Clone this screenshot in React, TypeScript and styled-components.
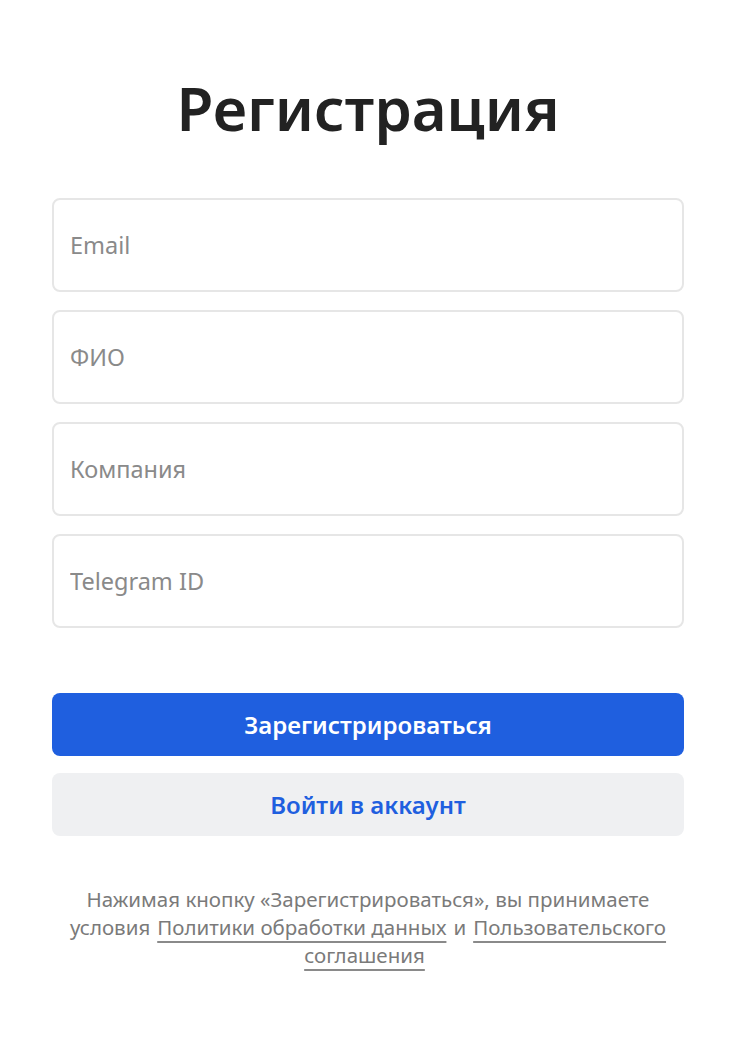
import React from 'react';
import styled, { createGlobalStyle } from 'styled-components';

const GlobalStyle = createGlobalStyle`
  * { box-sizing: border-box; }
  body {
    margin: 0;
    background: #ffffff;
    font-family: "Noto Sans", "Open Sans", sans-serif;
  }
`;

const Page = styled.div`
  width: 632px;
  margin: 0 auto;
  padding: 68px 0 40px;
  display: flex;
  flex-direction: column;
`;

const Title = styled.h1`
  margin: 0 0 50px;
  text-align: center;
  font-size: 60px;
  line-height: 80px;
  font-weight: 600;
  color: #222222;
`;

const Fields = styled.div`
  display: flex;
  flex-direction: column;
  gap: 18px;
`;

const Input = styled.input`
  width: 100%;
  height: 94px;
  padding: 0 16px;
  border: 2px solid #e6e6e6;
  border-radius: 8px;
  font-family: inherit;
  font-size: 23.5px;
  color: #222;
  outline: none;
  &::placeholder {
    color: #8a8a8a;
  }
`;

const Actions = styled.div`
  display: flex;
  flex-direction: column;
  gap: 17px;
  margin-top: 65px;
`;

const Button = styled.button<{ variant: 'primary' | 'secondary' }>`
  height: 63px;
  border: none;
  border-radius: 8px;
  font-family: inherit;
  font-size: 24px;
  font-weight: 600;
  cursor: pointer;
  background: ${({ variant }) => (variant === 'primary' ? '#1f5fdf' : '#eff0f2')};
  color: ${({ variant }) => (variant === 'primary' ? '#ffffff' : '#1f5fdf')};
`;

const Note = styled.p`
  margin: 49px 0 0;
  padding-bottom: 8px;
  text-align: center;
  font-size: 20.5px;
  line-height: 28px;
  color: #7a7a7a;
`;

const Link = styled.a`
  color: #7a7a7a;
  text-decoration: underline;
  text-decoration-color: #8a8a8a;
  text-decoration-thickness: 2px;
  text-underline-offset: 6px;
  text-decoration-skip-ink: none;
  margin: 0 7px;
`;

export default function App() {
  return (
    <>
      <GlobalStyle />
      <Page>
        <Title>Регистрация</Title>
        <Fields>
          <Input placeholder="Email" />
          <Input placeholder="ФИО" />
          <Input placeholder="Компания" />
          <Input placeholder="Telegram ID" />
        </Fields>
        <Actions>
          <Button variant="primary">Зарегистрироваться</Button>
          <Button variant="secondary">Войти в аккаунт</Button>
        </Actions>
        <Note>
          Нажимая кнопку «Зарегистрироваться», вы принимаете условия
          <Link href="#">Политики обработки данных</Link>и
          <Link href="#">Пользовательского соглашения</Link>
        </Note>
      </Page>
    </>
  );
}
